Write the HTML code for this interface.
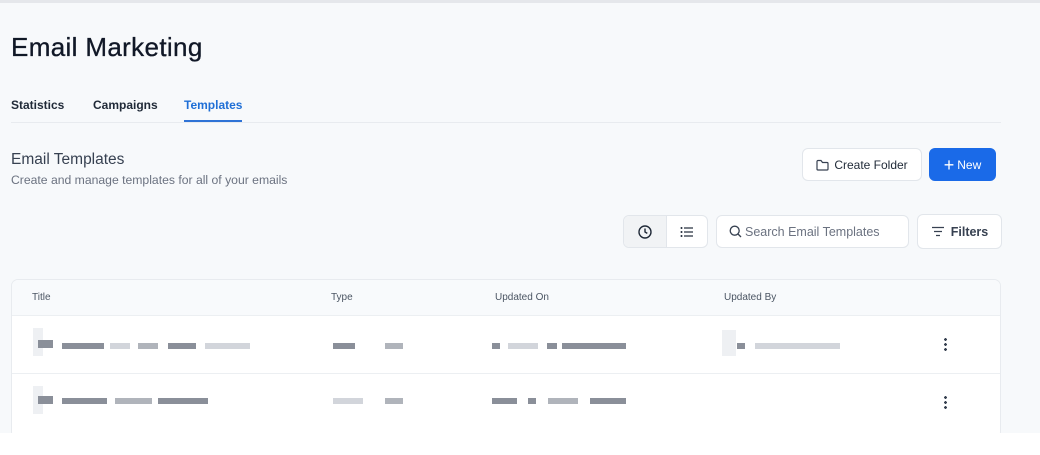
<!DOCTYPE html>
<html><head><style>
body{margin:0;width:1040px;height:455px;background:#f7f9fb;font-family:"Liberation Sans",sans-serif;position:relative;overflow:hidden;color:#111827}
.a{position:absolute}
.top{left:0;top:0;width:1040px;height:3px;background:#e5e7eb}
h1{position:absolute;left:11px;top:32px;margin:0;font-size:26px;font-weight:400;color:#111827;letter-spacing:0.35px;-webkit-text-stroke:0.3px #111827}
.tab{position:absolute;top:98px;font-size:12px;font-weight:700;color:#1f2937}
.btn{position:absolute;background:#fff;border:1px solid #e2e6eb;border-radius:6px;box-sizing:border-box;font-size:12px;color:#1f2937;display:flex;align-items:center}
.b{position:absolute;height:6px;background:#8a8f99}
.l{background:#d2d5db}
.m{background:#b0b4bb}
</style></head><body>
<div class="a top"></div>
<h1>Email Marketing</h1>
<div class="tab" style="left:11px">Statistics</div>
<div class="tab" style="left:93px">Campaigns</div>
<div class="tab" style="left:184px;color:#1f6fd6">Templates</div>
<div class="a" style="left:11px;top:122px;width:990px;height:1px;background:#e8ebef"></div>
<div class="a" style="left:184px;top:120px;width:58px;height:2px;background:#2f73d6"></div>
<div class="a" style="left:11px;top:151px;font-size:15.5px;color:#374151">Email Templates</div>
<div class="a" style="left:11px;top:173px;font-size:12.2px;color:#6b7280">Create and manage templates for all of your emails</div>
<div class="btn" style="left:802px;top:148px;width:120px;height:33px;justify-content:center"><svg width="13" height="12" viewBox="0 0 13 12" style="margin-right:5px"><path d="M1 2.5V10a1 1 0 0 0 1 1h9a1 1 0 0 0 1-1V4.5a1 1 0 0 0-1-1H6.5L5 1.5H2a1 1 0 0 0-1 1z" fill="none" stroke="#374151" stroke-width="1.2"/></svg>Create Folder</div>
<div class="btn" style="left:929px;top:148px;width:67px;height:33px;background:#1a6ae8;border-color:#1a6ae8;color:#fff;justify-content:center"><span style="font-size:18px;margin-right:3px;line-height:1">+</span>New</div>
<div class="btn" style="left:623px;top:215px;width:85px;height:33px"><div style="width:42px;height:31px;background:#f1f3f5;border-right:1px solid #e2e6eb;display:flex;align-items:center;justify-content:center;border-radius:5px 0 0 5px"><svg width="14" height="14" viewBox="0 0 14 14"><circle cx="7" cy="7" r="6" fill="none" stroke="#1f2937" stroke-width="1.4"/><path d="M7 3.5V7l2.3 1.4" fill="none" stroke="#1f2937" stroke-width="1.4"/></svg></div><div style="flex:1;display:flex;justify-content:center"><svg width="14" height="12" viewBox="0 0 14 12"><g fill="#1f2937"><circle cx="1.5" cy="2" r="1"/><circle cx="1.5" cy="6" r="1"/><circle cx="1.5" cy="10" r="1"/><rect x="4" y="1.4" width="9" height="1.2"/><rect x="4" y="5.4" width="9" height="1.2"/><rect x="4" y="9.4" width="9" height="1.2"/></g></svg></div></div>
<div class="btn" style="left:716px;top:215px;width:193px;height:33px;padding-left:12px;color:#6b7280;font-size:12.5px"><svg width="13" height="13" viewBox="0 0 13 13" style="margin-right:3px"><circle cx="5.7" cy="5.7" r="4.5" fill="none" stroke="#374151" stroke-width="1.3"/><path d="M9 9l3 3" stroke="#374151" stroke-width="1.3"/></svg>Search Email Templates</div>
<div class="btn" style="left:917px;top:214px;width:85px;height:35px;justify-content:center;font-weight:700;font-size:12.5px;color:#374151"><svg width="14" height="11" viewBox="0 0 14 11" style="margin-right:6px"><path d="M1 1.5h12M3 5.5h8M5 9.5h4" stroke="#374151" stroke-width="1.3"/></svg>Filters</div>
<div class="a" style="left:11px;top:279px;width:990px;height:160px;background:#fff;border:1px solid #e8ebef;border-radius:7px;box-sizing:border-box;overflow:hidden">
<div style="height:35px;background:#f8fafc;border-bottom:1px solid #eceff2;position:relative;font-size:10px;color:#4b5563">
<span class="a" style="left:20px;top:12px">Title</span><span class="a" style="left:319px;top:12px">Type</span><span class="a" style="left:483px;top:12px">Updated On</span><span class="a" style="left:712px;top:12px">Updated By</span></div>
<div style="height:57px;border-bottom:1px solid #eceff2"></div>
</div>
<div class="a" style="left:0;top:433px;width:1040px;height:22px;background:#fff"></div>
<div class="b l" style="left:33px;top:328px;width:10px;height:28px;background:#eef0f3"></div>
<div class="b" style="left:38px;top:340px;width:15px;height:8px;background:#8a8f99"></div>
<div class="b" style="left:62px;top:343px;width:42px"></div><div class="b l" style="left:110px;top:343px;width:20px"></div><div class="b m" style="left:138px;top:343px;width:20px"></div><div class="b" style="left:168px;top:343px;width:28px"></div><div class="b l" style="left:205px;top:343px;width:45px"></div>
<div class="b" style="left:333px;top:343px;width:22px"></div><div class="b m" style="left:385px;top:343px;width:18px"></div>
<div class="b" style="left:492px;top:343px;width:8px"></div><div class="b l" style="left:508px;top:343px;width:30px"></div><div class="b" style="left:547px;top:343px;width:10px"></div><div class="b" style="left:562px;top:343px;width:64px"></div>
<div class="b l" style="left:722px;top:330px;width:14px;height:26px;background:#eef0f3"></div><div class="b" style="left:737px;top:343px;width:8px"></div><div class="b l" style="left:755px;top:343px;width:85px"></div>
<div class="a" style="left:944px;top:337px;width:3px;height:14px;background:radial-gradient(circle,#374151 1.3px,transparent 1.5px) 0 0/3px 5px"></div>
<div class="b l" style="left:33px;top:386px;width:10px;height:28px;background:#eef0f3"></div>
<div class="b" style="left:38px;top:396px;width:15px;height:8px"></div>
<div class="b" style="left:62px;top:398px;width:45px"></div><div class="b m" style="left:115px;top:398px;width:37px"></div><div class="b" style="left:158px;top:398px;width:50px"></div>
<div class="b l" style="left:333px;top:398px;width:30px"></div><div class="b m" style="left:385px;top:398px;width:18px"></div>
<div class="b" style="left:492px;top:398px;width:25px"></div><div class="b" style="left:528px;top:398px;width:8px"></div><div class="b m" style="left:548px;top:398px;width:30px"></div><div class="b" style="left:590px;top:398px;width:36px"></div>
<div class="a" style="left:944px;top:395px;width:3px;height:14px;background:radial-gradient(circle,#374151 1.3px,transparent 1.5px) 0 0/3px 5px"></div>
</body></html>
